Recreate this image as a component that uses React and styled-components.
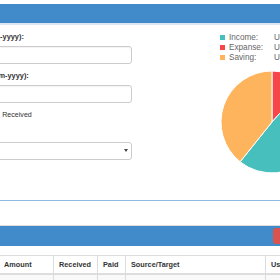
import React from 'react';
import styled, { createGlobalStyle } from 'styled-components';

const GlobalStyle = createGlobalStyle`
  html, body {
    margin: 0;
    padding: 0;
    background: #fff;
    overflow: hidden;
  }
  body {
    font-family: "Liberation Sans", Arial, sans-serif;
    color: #333;
  }
`;

const Viewport = styled.div`
  width: 280px;
  height: 280px;
  overflow: hidden;
`;

const Page = styled.div`
  width: 420px;
  margin-left: -64px;
  padding-top: 4px;
`;

const Panel = styled.div`
  border-top: ${(p) => (p.$topLine ? '1px solid #dddddd' : 'none')};
  border-bottom: ${(p) => (p.$bottomLine ? '1px solid #8db9e4' : 'none')};
  margin-bottom: ${(p) => p.$gap || 0}px;
`;

const PanelHeading = styled.div`
  height: ${(p) => p.$h}px;
  background: #428bca;
  border-bottom: ${(p) => (p.$under ? '2px solid #dbe6f2' : 'none')};
  display: flex;
  align-items: center;
  justify-content: flex-end;
  padding-right: 53px;
`;

const DangerButton = styled.button`
  width: 30px;
  height: 16px;
  border: none;
  border-radius: 3px;
  background: #d9534f;
  padding: 0;
`;

const PanelBody = styled.div`
  display: flex;
  padding: 7px 0 26px 0;
`;

const FormColumn = styled.div`
  width: 196px;
`;

const FormGroup = styled.div`
  margin-bottom: ${(p) => p.$mb}px;
`;

const Label = styled.label`
  display: block;
  font-size: 7.4px;
  font-weight: bold;
  line-height: 10px;
  margin-bottom: 4px;
  white-space: nowrap;
  color: #333;
`;

const TextInput = styled.input`
  display: block;
  box-sizing: border-box;
  width: 100%;
  height: 18px;
  border: 1px solid #cccccc;
  border-radius: 3px;
  background: #fff;
  box-shadow: inset 0 1px 1px rgba(0, 0, 0, 0.05);
  padding: 0 5px;
  outline: none;
`;

const CheckRow = styled.div`
  display: flex;
  gap: 28px;
  height: 10px;
  align-items: center;
`;

const CheckLabel = styled.label`
  display: flex;
  align-items: center;
  gap: 3px;
  font-size: 7.1px;
  line-height: 10px;
  color: #333;
  white-space: nowrap;

  input {
    width: 9px;
    height: 9px;
    margin: 0;
  }
`;

const SelectWrap = styled.div`
  position: relative;
  box-sizing: border-box;
  height: 18px;
  border: 1px solid #cccccc;
  border-radius: 3px;
  background: #fff;
`;

const SelectArrow = styled.span`
  position: absolute;
  right: 3px;
  top: 6px;
  width: 0;
  height: 0;
  border-left: 2px solid transparent;
  border-right: 2px solid transparent;
  border-top: 3px solid #444;
`;

const ChartColumn = styled.div`
  margin-left: 88px;
  width: 136px;
`;

const Legend = styled.div`
  margin-bottom: 8px;
`;

const LegendRow = styled.div`
  display: flex;
  align-items: center;
  height: 10px;
  font-size: 8.2px;
  color: #666;
  white-space: nowrap;
`;

const Swatch = styled.span`
  width: 5px;
  height: 5px;
  background: ${(p) => p.$color};
  margin-right: 4px;
  flex: none;
`;

const LegendName = styled.span`
  width: 45px;
  flex: none;
`;

const TableBody = styled.div`
  padding: 9px 0 0 4px;
`;

const Table = styled.table`
  border-collapse: collapse;
  table-layout: fixed;
  width: 416px;
  font-size: 7.3px;
`;

const Th = styled.th`
  text-align: left;
  font-weight: bold;
  color: #333;
  line-height: 9px;
  padding: 4px 5px;
  border: 1px solid #dddddd;
  border-bottom-width: 2px;
  white-space: nowrap;
  overflow: hidden;
`;

const StripedRow = styled.tr`
  background: #f9f9f9;
`;

const Td = styled.td`
  border: 1px solid #dddddd;
  line-height: 9px;
  padding: 4px 5px;
`;

const slices = [
  { color: '#F7464A', d: 'M52 52 L52 1 A51 51 0 0 1 86.12 14.1 Z' },
  { color: '#46BFBD', d: 'M52 52 L86.12 14.1 A51 51 0 0 1 20.11 91.8 Z' },
  { color: '#FDB45C', d: 'M52 52 L20.11 91.8 A51 51 0 0 1 52 1 Z' },
];

const legend = [
  { name: 'Income:', color: '#46BFBD' },
  { name: 'Expanse:', color: '#F7464A' },
  { name: 'Saving:', color: '#FDB45C' },
];

const columns = [
  { title: 'Date', width: 58 },
  { title: 'Amount', width: 55 },
  { title: 'Received', width: 44 },
  { title: 'Paid', width: 28 },
  { title: 'Source/Target', width: 140 },
  { title: 'Used For', width: 91 },
];

export default function App() {
  return (
    <Viewport>
      <GlobalStyle />
      <Page>
        <Panel $bottomLine $gap={24}>
          <PanelHeading $h={19} $under />
          <PanelBody>
            <FormColumn>
              <FormGroup $mb={7}>
                <Label>Start Date (dd-mm-yyyy):</Label>
                <TextInput type="text" />
              </FormGroup>
              <FormGroup $mb={7}>
                <Label>Finish Date (dd-mm-yyyy):</Label>
                <TextInput type="text" />
              </FormGroup>
              <FormGroup $mb={8}>
                <CheckRow>
                  <CheckLabel>
                    <input type="checkbox" /> Paid
                  </CheckLabel>
                  <CheckLabel>
                    <input type="checkbox" /> Received
                  </CheckLabel>
                </CheckRow>
              </FormGroup>
              <FormGroup $mb={0}>
                <Label>Type:</Label>
                <SelectWrap>
                  <SelectArrow />
                </SelectWrap>
              </FormGroup>
            </FormColumn>
            <ChartColumn>
              <Legend>
                {legend.map((l) => (
                  <LegendRow key={l.name}>
                    <Swatch $color={l.color} />
                    <LegendName>{l.name}</LegendName>
                    <span>Unknown</span>
                  </LegendRow>
                ))}
              </Legend>
              <svg width="104" height="104" viewBox="0 0 104 104" style={{ display: 'block' }}>
                {slices.map((s) => (
                  <path key={s.color} d={s.d} fill={s.color} stroke="#fff" strokeWidth="1" />
                ))}
              </svg>
            </ChartColumn>
          </PanelBody>
        </Panel>
        <Panel $topLine>
          <PanelHeading $h={20}>
            <DangerButton />
          </PanelHeading>
          <TableBody>
            <Table>
              <colgroup>
                {columns.map((c) => (
                  <col key={c.title} style={{ width: c.width }} />
                ))}
              </colgroup>
              <thead>
                <tr>
                  {columns.map((c) => (
                    <Th key={c.title}>{c.title}</Th>
                  ))}
                </tr>
              </thead>
              <tbody>
                <StripedRow>
                  {columns.map((c) => (
                    <Td key={c.title}>&nbsp;</Td>
                  ))}
                </StripedRow>
              </tbody>
            </Table>
          </TableBody>
        </Panel>
      </Page>
    </Viewport>
  );
}
